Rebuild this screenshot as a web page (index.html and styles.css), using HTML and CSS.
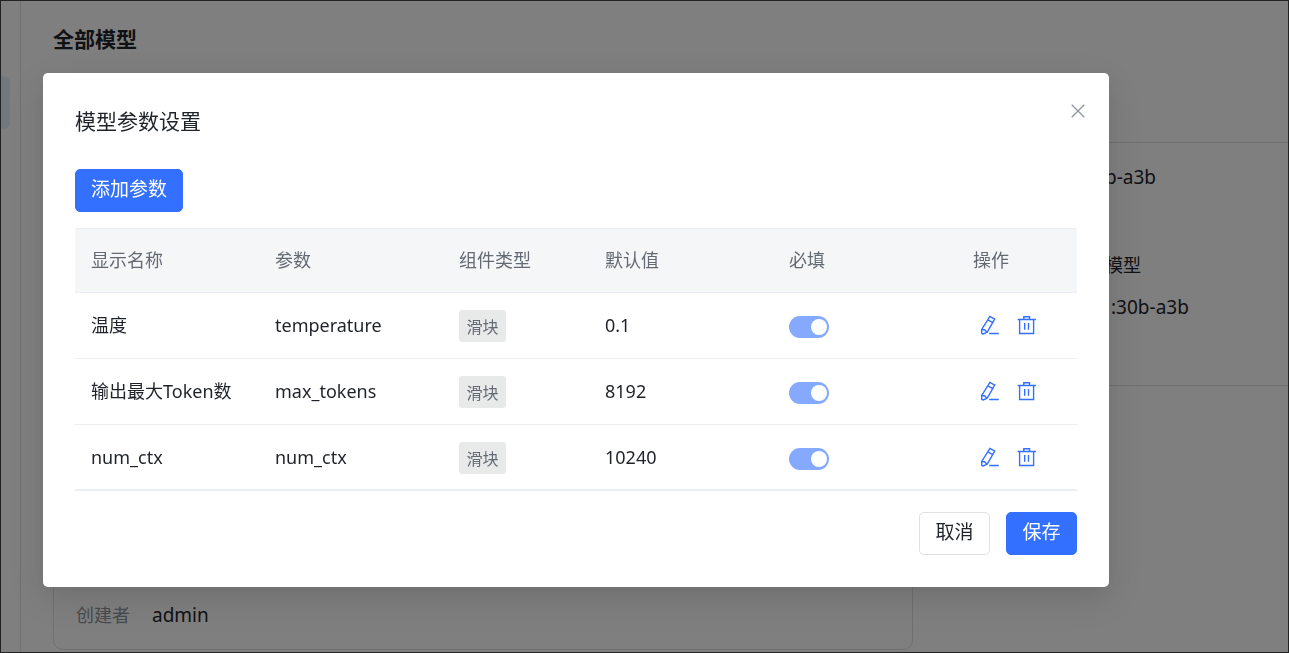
FILE: index.html
```
<!DOCTYPE html>
<html lang="zh-CN">
<head>
<meta charset="utf-8">
<title>模型参数设置</title>
<link rel="stylesheet" href="styles.css">
</head>
<body>
<svg class="sprite" aria-hidden="true">
  <symbol id="edit" viewBox="0 0 20 20"><path d="M9.9 1.4 14.7 4.1 7.2 17.1 3.2 18.9 1.8 18.5 1.6 14.7ZM7.9 4.9 12.7 7.6M1.8 14.5 4.6 14.7 6.9 17.2M9.2 18.5H18.8"/></symbol>
  <symbol id="trash" viewBox="0 0 20 20"><path d="M.6 4.5H18.9M2.6 4.5V18.5H16.6V4.5M6.8 4.5V1.7H12.5V4.5M7.7 8V14.8M11.5 8V14.8"/></symbol>
</svg>
<div class="app">
  <aside class="sidebar"><div class="active-item"></div></aside>
  <main class="page">
    <h1>全部模型</h1>
    <div class="cards">
      <section class="card"></section>
      <section class="card card-right">
        <p class="card-name">b-a3b</p>
        <p class="card-type">模型</p>
        <p class="card-base">:30b-a3b</p>
      </section>
      <section class="card card-bottom">
        <p><span class="label">创建者</span>admin</p>
      </section>
    </div>
  </main>
</div>
<div class="overlay">
  <div class="dialog" role="dialog" aria-modal="true" aria-labelledby="title">
    <header class="head">
      <h2 id="title">模型参数设置</h2>
      <button class="close" type="button" aria-label="关闭"><svg viewBox="0 0 14 14"><path d="M.7.7 13.3 13.3M13.3.7.7 13.3"/></svg></button>
    </header>
    <button class="btn primary" type="button">添加参数</button>
    <table>
      <colgroup><col class="w-l"><col class="w-l"><col class="w-m"><col class="w-l"><col class="w-l"><col></colgroup>
      <thead><tr><th>显示名称</th><th>参数</th><th>组件类型</th><th>默认值</th><th>必填</th><th>操作</th></tr></thead>
      <tbody>
        <tr><td>温度</td><td>temperature</td><td><span class="tag">滑块</span></td><td>0.1</td><td><input class="switch" type="checkbox" role="switch" aria-label="必填" checked disabled></td>
          <td><div class="ops"><button type="button" aria-label="编辑"><svg><use href="#edit"/></svg></button><button type="button" aria-label="删除"><svg><use href="#trash"/></svg></button></div></td></tr>
        <tr><td>输出最大Token数</td><td>max_tokens</td><td><span class="tag">滑块</span></td><td>8192</td><td><input class="switch" type="checkbox" role="switch" aria-label="必填" checked disabled></td>
          <td><div class="ops"><button type="button" aria-label="编辑"><svg><use href="#edit"/></svg></button><button type="button" aria-label="删除"><svg><use href="#trash"/></svg></button></div></td></tr>
        <tr><td>num_ctx</td><td>num_ctx</td><td><span class="tag">滑块</span></td><td>10240</td><td><input class="switch" type="checkbox" role="switch" aria-label="必填" checked disabled></td>
          <td><div class="ops"><button type="button" aria-label="编辑"><svg><use href="#edit"/></svg></button><button type="button" aria-label="删除"><svg><use href="#trash"/></svg></button></div></td></tr>
      </tbody>
    </table>
    <footer class="foot">
      <button class="btn" type="button">取消</button>
      <button class="btn primary" type="button">保存</button>
    </footer>
  </div>
</div>
</body>
</html>
```
FILE: styles.css
```
* { box-sizing: border-box; }
body {
  margin: 0;
  height: 100vh;
  overflow: hidden;
  font: 18px/28px "Noto Sans", "Noto Sans CJK SC", sans-serif;
  color: #1f2329;
  background: #fff;
}
button { font: inherit; color: inherit; padding: 0; border: 0; background: none; }
h1, h2, p { margin: 0; }
.sprite { display: none; }

.app { display: flex; height: 100%; }
.sidebar { flex: none; width: 21px; padding-top: 76px; border-right: 1px solid #dee0e3; }
.active-item { width: 10px; height: 53px; background: #e6f0fa; border-radius: 0 6px 6px 0; }
.page { flex: 1; min-width: 0; padding: 23px 0 0 32px; }
h1 { font-size: 21px; line-height: 32px; font-weight: 700; }
.cards { display: grid; grid-template-columns: 860px minmax(0, 1fr); grid-auto-rows: 244px; gap: 20px; padding-top: 87px; }
.card { border: 1px solid #dee0e3; border-radius: 10px; padding: 20px 22px; font-size: 19px; }
.card-right { display: flex; flex-direction: column; gap: 14px; padding: 20px 0 20px 171px; border-right: 0; border-radius: 10px 0 0 10px; }
.card-name { padding-bottom: 46px; }
.card-type { font-size: 18px; }
.card-base { padding-left: 6px; }
.card-bottom { display: flex; align-items: flex-end; }
.label { display: inline-block; width: 76px; font-size: 18px; color: #8f959e; }

.overlay {
  position: fixed;
  inset: 0;
  padding: 72px 179px 0 42px;
  border: 1px solid #222;
  background: rgba(0, 0, 0, .5);
}
.dialog {
  padding: 32px;
  background: #fff;
  border-radius: 5px;
  box-shadow: 0 12px 40px 6px rgba(0, 0, 0, .08), 0 10px 24px rgba(0, 0, 0, .06);
}
.head { display: flex; justify-content: space-between; padding-bottom: 32px; }
h2 { font-size: 21px; line-height: 32px; font-weight: 400; }
.close { width: 14px; height: 14px; margin: -1px -8px 0 0; }
.close svg { display: block; width: 14px; height: 14px; fill: none; stroke: #8f959e; stroke-width: 1.3; }

.btn {
  min-width: 71px;
  height: 43px;
  padding: 0 15px 3px;
  font-size: 19px;
  line-height: 28px;
  background: #fff;
  border: 1px solid #dee0e3;
  border-radius: 5px;
}
.primary { color: #fff; background: #3370ff; border-color: #3370ff; }

table { width: 100%; margin: 16px 0 21px; table-layout: fixed; border-collapse: separate; border-spacing: 0; }
.w-l { width: 184px; }
.w-m { width: 146px; }
th, td { padding: 0 16px 2px; text-align: left; white-space: nowrap; border-bottom: 1px solid #ebeef5; }
th { height: 65px; font-weight: 400; color: #646a73; background: #f5f6f7; border-top: 1px solid #ebeef5; }
td { height: 66px; }
tbody tr:last-child td { padding-bottom: 0; border-bottom-width: 2px; }
.tag {
  display: block;
  width: 47px;
  margin-top: 2px;
  padding: 3px 0 1px;
  text-align: center;
  font-size: 16px;
  color: #646a73;
  background: #e8eaea;
  border-radius: 3px;
}
.switch {
  appearance: none;
  display: block;
  width: 40px;
  height: 22px;
  margin: 4px 0 0;
  padding: 3px 2px;
  border-radius: 11px;
  background: #85a9ff;
}
.switch::before { content: ""; display: block; width: 16px; height: 16px; margin-left: 20px; border-radius: 50%; background: #fff; }
.ops { display: flex; gap: 17px; padding-left: 7px; }
.ops svg { display: block; width: 20px; height: 20px; fill: none; stroke: #3370ff; stroke-width: 1.4; }
.foot { display: flex; justify-content: flex-end; gap: 16px; }
```
